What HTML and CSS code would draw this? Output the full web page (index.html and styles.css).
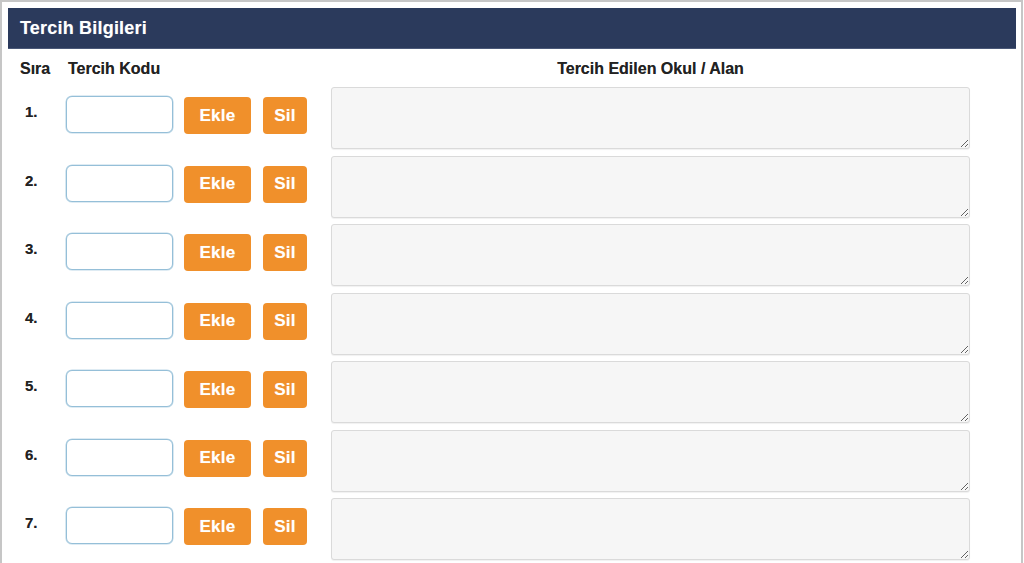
FILE: index.html
```html
<!DOCTYPE html>
<html lang="tr">
<head>
<meta charset="utf-8">
<title>Tercih Bilgileri</title>
<link rel="stylesheet" href="styles.css">
</head>
<body>
<div class="frame">
  <div class="panel-title">Tercih Bilgileri</div>
  <div class="labels">
    <div class="col-no">Sıra</div>
    <div class="col-code">Tercih Kodu</div>
    <div class="col-gap"></div>
    <div class="col-name">Tercih Edilen Okul / Alan</div>
  </div>
  <div class="rows">
    <div class="row"><div class="no">1.</div><input class="code" type="text"><button class="btn btn-add">Ekle</button><button class="btn btn-del">Sil</button><textarea class="name"></textarea></div>
    <div class="row"><div class="no">2.</div><input class="code" type="text"><button class="btn btn-add">Ekle</button><button class="btn btn-del">Sil</button><textarea class="name"></textarea></div>
    <div class="row"><div class="no">3.</div><input class="code" type="text"><button class="btn btn-add">Ekle</button><button class="btn btn-del">Sil</button><textarea class="name"></textarea></div>
    <div class="row"><div class="no">4.</div><input class="code" type="text"><button class="btn btn-add">Ekle</button><button class="btn btn-del">Sil</button><textarea class="name"></textarea></div>
    <div class="row"><div class="no">5.</div><input class="code" type="text"><button class="btn btn-add">Ekle</button><button class="btn btn-del">Sil</button><textarea class="name"></textarea></div>
    <div class="row"><div class="no">6.</div><input class="code" type="text"><button class="btn btn-add">Ekle</button><button class="btn btn-del">Sil</button><textarea class="name"></textarea></div>
    <div class="row"><div class="no">7.</div><input class="code" type="text"><button class="btn btn-add">Ekle</button><button class="btn btn-del">Sil</button><textarea class="name"></textarea></div>
  </div>
</div>
</body>
</html>
```
FILE: styles.css
```css
html, body {
  margin: 0;
  padding: 0;
  height: 563px;
  overflow: hidden;
  background: #ffffff;
}
body {
  font-family: "Liberation Sans", Arial, sans-serif;
  color: #222222;
}
.frame {
  box-sizing: border-box;
  width: 1023px;
  height: 563px;
  overflow: hidden;
  border: 2px solid #c6c6c6;
  border-bottom: none;
  padding: 6px 5px 0 6px;
}
.panel-title {
  height: 41px;
  box-sizing: border-box;
  background: #2b3a5c;
  border-bottom: 1px solid #4a5878;
  color: #ffffff;
  font-weight: bold;
  font-size: 18px;
  letter-spacing: 0.2px;
  line-height: 41px;
  padding-left: 12px;
  text-shadow: 0 0 1px rgba(255,255,255,0.35);
}
.labels {
  display: flex;
  font-weight: bold;
  font-size: 16px;
  line-height: 18px;
  padding-top: 11px;
  height: 35px;
  box-sizing: border-box;
  text-shadow: 0 0 0.6px rgba(0,0,0,0.5);
}
.col-no {
  width: 58px;
  padding-left: 12px;
  box-sizing: border-box;
}
.col-code {
  width: 107px;
  padding-left: 2px;
  box-sizing: border-box;
  white-space: nowrap;
}
.col-gap {
  width: 158px;
}
.col-name {
  width: 639px;
  text-align: center;
}
.row {
  display: flex;
  align-items: flex-start;
  height: 68.5px;
}
.no {
  width: 58px;
  box-sizing: border-box;
  padding-left: 17px;
  margin-top: 19px;
  font-weight: bold;
  font-size: 15px;
  line-height: 17px;
  text-shadow: 0 0 0.6px rgba(0,0,0,0.5);
}
.code {
  box-sizing: border-box;
  width: 107px;
  height: 37px;
  margin: 12px 0 0 0;
  border: 1px solid #95bfd8;
  border-radius: 6px;
  background: #ffffff;
  padding: 0 6px;
  font-family: "Liberation Sans", Arial, sans-serif;
  font-size: 14px;
  box-shadow: 0 0 0 0.6px rgba(149,191,216,0.6);
}
.btn {
  box-sizing: border-box;
  height: 37px;
  margin-top: 13px;
  border: none;
  border-radius: 4px;
  background: #f0902b;
  color: #ffffff;
  font-family: "Liberation Sans", Arial, sans-serif;
  font-weight: bold;
  font-size: 17px;
  letter-spacing: 0.3px;
  padding: 0;
  text-align: center;
  text-shadow: 0 0 0.8px rgba(255,255,255,0.5);
}
.btn-add {
  width: 67px;
  margin-left: 11px;
}
.btn-del {
  width: 44px;
  margin-left: 12px;
}
.name {
  box-sizing: border-box;
  width: 639px;
  height: 62px;
  margin: 3px 0 0 24px;
  border: 1px solid #dadada;
  border-radius: 3px;
  background: #f6f6f6;
  box-shadow: 0 1px 1px rgba(0,0,0,0.06);
  resize: both;
  padding: 4px;
  font-family: "Liberation Sans", Arial, sans-serif;
}
```
